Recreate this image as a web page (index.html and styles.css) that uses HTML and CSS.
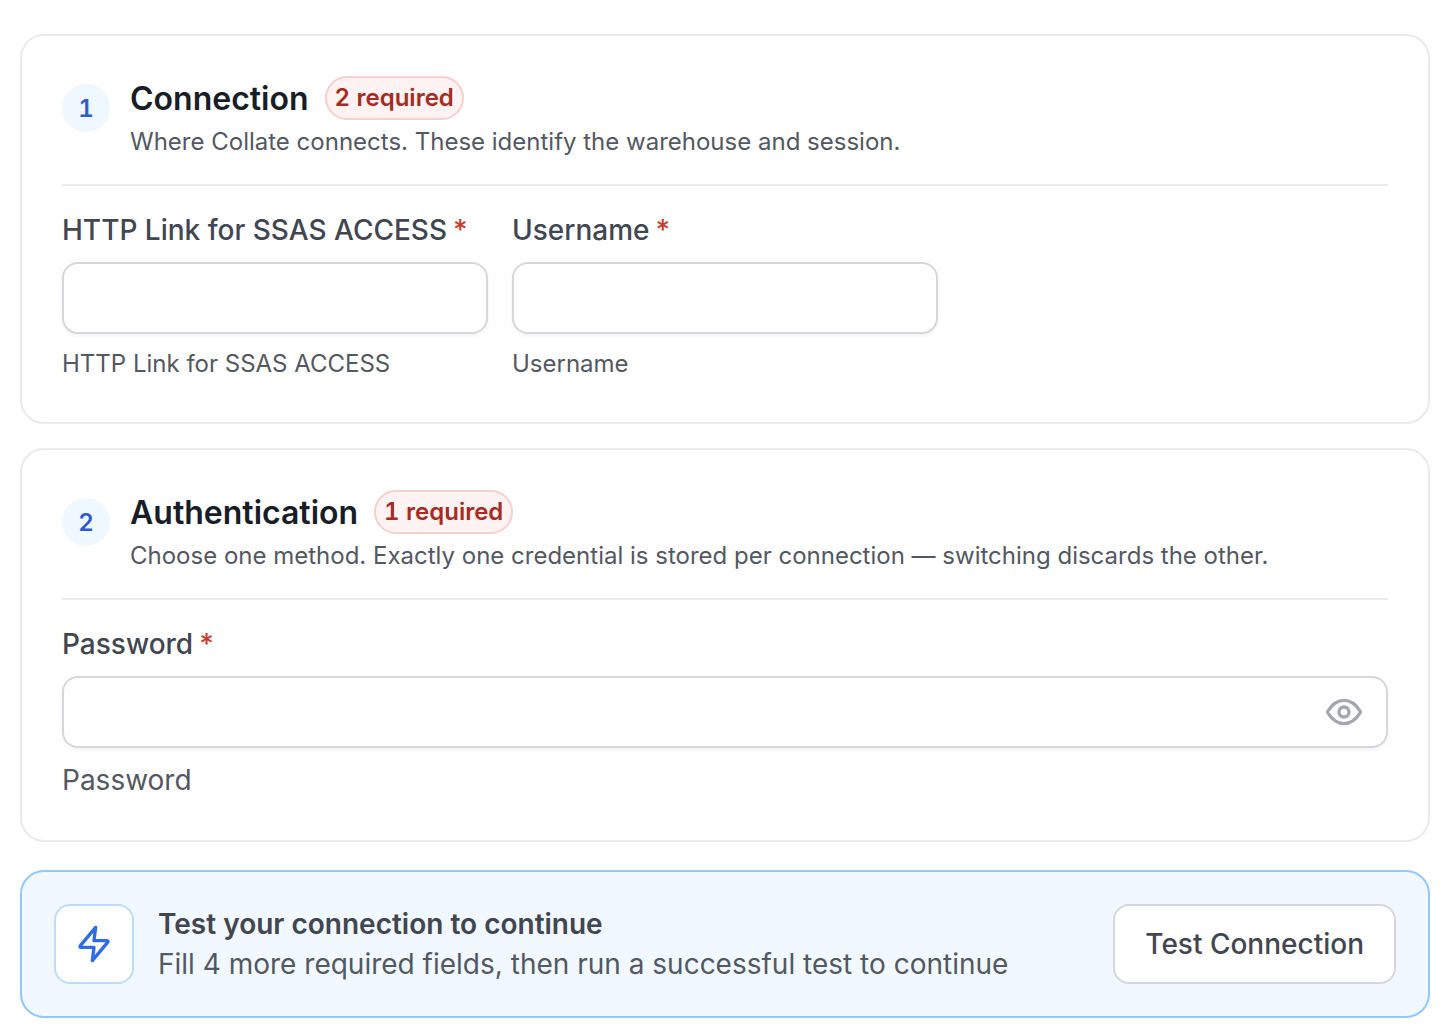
FILE: index.html
```html
<!DOCTYPE html>
<html lang="en">
<head>
<meta charset="utf-8">
<title>Connection details</title>
<link rel="stylesheet" href="styles.css">
</head>
<body>
<main class="page">
  <section class="card">
    <header class="card-header">
      <span class="step">1</span>
      <div class="heading">
        <div class="title-row">
          <h2 class="title">Connection</h2>
          <span class="badge">2 required</span>
        </div>
        <p class="subtitle">Where Collate connects. These identify the warehouse and session.</p>
      </div>
    </header>
    <div class="fields">
      <div class="field">
        <label class="label" for="link">HTTP Link for SSAS ACCESS <span class="star">*</span></label>
        <input class="input" id="link" type="text">
        <p class="hint">HTTP Link for SSAS ACCESS</p>
      </div>
      <div class="field">
        <label class="label" for="username">Username <span class="star">*</span></label>
        <input class="input" id="username" type="text">
        <p class="hint">Username</p>
      </div>
    </div>
  </section>

  <section class="card">
    <header class="card-header">
      <span class="step">2</span>
      <div class="heading">
        <div class="title-row">
          <h2 class="title">Authentication</h2>
          <span class="badge">1 required</span>
        </div>
        <p class="subtitle">Choose one method. Exactly one credential is stored per connection — switching discards the other.</p>
      </div>
    </header>
    <div class="field">
      <label class="label" for="password">Password <span class="star">*</span></label>
      <div class="password">
        <input class="input" id="password" type="password">
        <button class="reveal" type="button" aria-label="Show password">
          <svg width="40" height="40" viewBox="0 0 24 24" fill="none" stroke="currentColor" stroke-width="2" stroke-linecap="round" stroke-linejoin="round"><path d="M2.42 12.713c-.136-.215-.204-.323-.242-.49a1.173 1.173 0 0 1 0-.446c.038-.167.106-.274.242-.49C3.546 9.505 6.895 5 12 5s8.455 4.505 9.58 6.287c.137.215.205.323.243.49.029.125.029.322 0 .446-.038.167-.106.274-.242.49C20.455 14.495 17.105 19 12 19c-5.106 0-8.455-4.505-9.58-6.287Z"/><circle cx="12" cy="12" r="3"/></svg>
        </button>
      </div>
      <p class="hint hint-large">Password</p>
    </div>
  </section>

  <section class="banner">
    <span class="banner-icon">
      <svg width="40" height="40" viewBox="0 0 24 24" fill="none" stroke="currentColor" stroke-width="2" stroke-linecap="round" stroke-linejoin="round"><path d="M13 2 4.093 12.688c-.348.418-.523.628-.525.804a.5.5 0 0 0 .185.397c.138.111.41.111.955.111H12l-1 8 8.907-10.688c.348-.418.523-.628.525-.804a.5.5 0 0 0-.185-.397c-.138-.111-.41-.111-.955-.111H12l1-8Z"/></svg>
    </span>
    <div class="banner-text">
      <p class="banner-title">Test your connection to continue</p>
      <p class="banner-note">Fill 4 more required fields, then run a successful test to continue</p>
    </div>
    <button class="test-button" type="button">Test Connection</button>
  </section>
</main>
</body>
</html>
```
FILE: styles.css
```css
* { box-sizing: border-box; }
body { margin: 0; background: #fff; color: #414651; font-family: Inter, sans-serif; }
h2, p { margin: 0; }

.page { display: flex; flex-direction: column; gap: 24px; padding: 34px 14px 16px 20px; }

.card { padding: 40px; border: 2px solid #e9eaeb; border-radius: 24px; }
.card-header { display: flex; align-items: flex-start; gap: 20px; padding-bottom: 22px; margin-bottom: 24px; border-bottom: 2px solid #e9eaeb; }
.step { display: grid; place-items: center; flex: none; width: 48px; height: 48px; margin-top: 8px; border-radius: 50%; background: #f0f8ff; color: #2f5bd0; font-size: 24px; font-weight: 600; font-variant-numeric: tabular-nums; }
.title-row { display: flex; align-items: flex-start; gap: 16px; }
.title { color: #181d27; font-size: 32px; line-height: 46px; font-weight: 600; }
.badge { height: 44px; padding: 0 8px; border: 2px solid #f7cfcc; border-radius: 22px; background: #fef3f2; color: #a52c22; font-size: 24px; line-height: 40px; font-weight: 600; font-variant-numeric: tabular-nums; }
.subtitle { color: #535862; font-size: 24px; line-height: 40px; }

.fields { display: grid; grid-template-columns: repeat(3, 1fr); gap: 24px; }
.field { display: flex; flex-direction: column; }
.label { display: flex; gap: 6px; margin-bottom: 12px; font-size: 28px; line-height: 40px; font-weight: 500; }
.star { color: #cb3a2d; }
.input { width: 100%; height: 72px; padding: 0 24px; border: 2px solid #d5d7da; border-radius: 16px; background: #fff; box-shadow: 0 2px 4px rgba(10, 13, 18, .05); color: #181d27; font: inherit; font-size: 28px; }
.hint { margin-top: 12px; color: #535862; font-size: 24px; line-height: 36px; }
.hint-large { font-size: 28px; line-height: 40px; }
.password { position: relative; }
.password .input { padding-right: 80px; display: block; }
.reveal { position: absolute; right: 24px; top: 16px; padding: 0; border: 0; background: none; color: #a4a7ae; line-height: 0; }

.banner { display: flex; align-items: center; gap: 24px; margin-top: 4px; padding: 32px; border: 2px solid #93c8fc; border-radius: 24px; background: #f1f8ff; }
.banner-icon { display: grid; place-items: center; width: 80px; height: 80px; border: 2px solid #bddcfd; border-radius: 16px; background: #fff; color: #2f6be8; }
.banner-text { flex: 1; font-size: 28px; line-height: 40px; }
.banner-title { font-weight: 600; }
.banner-note { color: #535862; }
.test-button { height: 80px; padding: 0 30px; border: 2px solid #d5d7da; border-radius: 16px; background: #fff; color: #414651; font: inherit; font-size: 28px; font-weight: 500; }
```
